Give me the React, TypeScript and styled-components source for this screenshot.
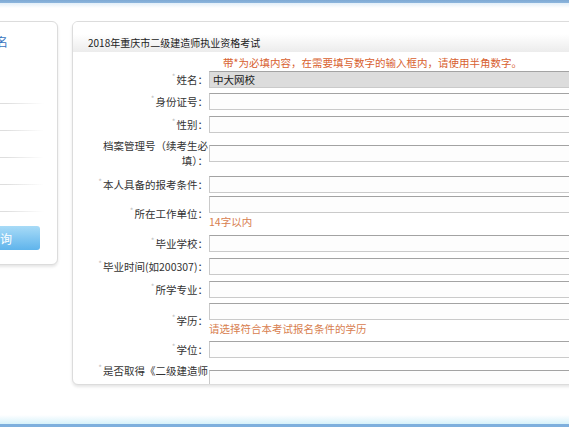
import styled, { createGlobalStyle } from "styled-components";

interface IField {
  label: string;
  required?: boolean;
  value?: string;
  hint?: string;
  top: number;
  clip?: boolean;
}

const fields: IField[] = [
  { label: "姓名：", required: true, value: "中大网校", top: 1 },
  { label: "身份证号：", required: true, top: 5 },
  { label: "性别：", required: true, top: 6 },
  { label: "档案管理号（续考生必填）：", top: 5 },
  { label: "本人具备的报考条件：", required: true, top: 8 },
  { label: "所在工作单位：", required: true, hint: "14字以内", top: 3 },
  { label: "毕业学校：", required: true, top: 5 },
  { label: "毕业时间(如200307)：", required: true, top: 6 },
  { label: "所学专业：", required: true, top: 6 },
  {
    label: "学历：",
    required: true,
    hint: "请选择符合本考试报名条件的学历",
    top: 5,
  },
  { label: "学位：", required: true, top: 4 },
  {
    label: "是否取得《二级建造师执业资格证书》：",
    required: true,
    top: 5,
    clip: true,
  },
];

const GlobalStyle = createGlobalStyle`
  html, body {
    margin: 0;
    padding: 0;
    background: #fff;
    overflow: hidden;
  }
  body {
    font-family: "Noto Sans CJK SC", "Noto Sans", sans-serif;
    color: #333;
  }
`;

const Page = styled.div`
  height: 100vh;
  display: flex;
  flex-direction: column;
  overflow: hidden;
`;

const TopBar = styled.div`
  height: 8px;
  flex-shrink: 0;
  background: linear-gradient(#7ea9d4 0, #8db6dd 3px, #e2eef8 3px, #fff 8px);
`;

const BottomBar = styled.div`
  height: 12px;
  flex-shrink: 0;
  background: linear-gradient(#fff 0, #d6f1fa 9px, #7eafdd 9px);
`;

const Body = styled.div`
  flex: 1;
  display: flex;
  align-items: flex-start;
  gap: 14px;
  padding-top: 13px;
  margin-left: -53px;
  overflow: hidden;
`;

const Panel = styled.div`
  flex-shrink: 0;
  background: #fff;
  border: 1px solid #dcdcdc;
  border-radius: 6px;
  box-shadow: 0 2px 3px rgba(0, 0, 0, 0.1);
  box-sizing: border-box;
  overflow: hidden;
`;

const Side = styled(Panel)`
  width: 111px;
  padding: 11px 19px 14px 12px;
`;

const SideTitle = styled.div`
  font-size: 12px;
  line-height: 18px;
  color: #3a76c0;
  margin-bottom: 26px;
`;

const SideList = styled.ul`
  list-style: none;
  margin: 0 0 14px;
  padding: 0;
`;

const SideItem = styled.li`
  height: 27px;
  position: relative;
  &::after {
    content: "";
    position: absolute;
    left: 0;
    right: -6px;
    bottom: 0;
    height: 1px;
    background: linear-gradient(to right, #dedede 55%, rgba(222, 222, 222, 0));
  }
`;

const SideButton = styled.button`
  display: block;
  width: 80px;
  height: 24px;
  border: none;
  border-radius: 3px;
  background: linear-gradient(#a8dbf7, #5fb4ec);
  color: #fff;
  font-family: inherit;
  font-size: 12px;
  padding: 0;
`;

const Main = styled(Panel)`
  width: 540px;
  height: 364px;
`;

const MainHeader = styled.div`
  height: 30px;
  display: flex;
  align-items: flex-end;
  padding: 0 0 2px 15px;
  box-sizing: border-box;
  background: linear-gradient(#fff 0, #fff 40%, #ececec 100%);
  font-size: 10px;
  line-height: 15px;
  color: #222;
`;

const Form = styled.div`
  padding: 3px 0 0 21px;
`;

const Grid = styled.div<{ $top?: number }>`
  display: grid;
  grid-template-columns: 114px 1fr;
  column-gap: 1px;
  align-items: center;
  margin-top: ${(p) => p.$top ?? 0}px;
`;

const Notice = styled.div`
  grid-column: 2;
  padding-left: 14px;
  font-size: 10.5px;
  line-height: 15px;
  color: #d8612f;
`;

const Label = styled.div<{ $clip?: boolean }>`
  font-size: 10.5px;
  line-height: 15px;
  text-align: right;
  color: #333;
  ${(p) => p.$clip && "height: 30px; overflow: hidden; clip-path: inset(0 0 15px 0);"}
`;

const Star = styled.span`
  font-size: 8px;
  color: #bdbdbd;
  vertical-align: top;
  line-height: 10px;
  margin-right: 1px;
`;

const Field = styled.div`
  display: flex;
  flex-direction: column;
`;

const Input = styled.input<{ $filled?: boolean }>`
  box-sizing: border-box;
  width: 100%;
  height: 17px;
  margin: 0;
  padding: 0 3px;
  border: 1px solid #cacaca;
  border-top-color: #a3a3a3;
  background: ${(p) => (p.$filled ? "#dcdcdc" : "#fdfdfd")};
  font-family: inherit;
  font-size: 10.5px;
  color: #222;
  outline: none;
`;

const Hint = styled.div`
  font-size: 10.5px;
  line-height: 17px;
  color: #d8804f;
`;

function App() {
  return (
    <>
      <GlobalStyle />
      <Page>
        <TopBar />
        <Body>
          <Side>
            <SideTitle>网上报名</SideTitle>
            <SideList>
              {[0, 1, 2, 3, 4].map((i) => (
                <SideItem key={i} />
              ))}
            </SideList>
            <SideButton>查询</SideButton>
          </Side>
          <Main>
            <MainHeader>2018年重庆市二级建造师执业资格考试</MainHeader>
            <Form>
              <Grid>
                <Notice>带*为必填内容，在需要填写数字的输入框内，请使用半角数字。</Notice>
              </Grid>
              {fields.map((f) => (
                <Grid key={f.label} $top={f.top}>
                  <Label $clip={f.clip}>
                    {f.required && <Star>*</Star>}
                    {f.label}
                  </Label>
                  <Field>
                    <Input
                      $filled={!!f.value}
                      defaultValue={f.value}
                      readOnly={!!f.value}
                    />
                    {f.hint && <Hint>{f.hint}</Hint>}
                  </Field>
                </Grid>
              ))}
            </Form>
          </Main>
        </Body>
        <BottomBar />
      </Page>
    </>
  );
}

export default App;
